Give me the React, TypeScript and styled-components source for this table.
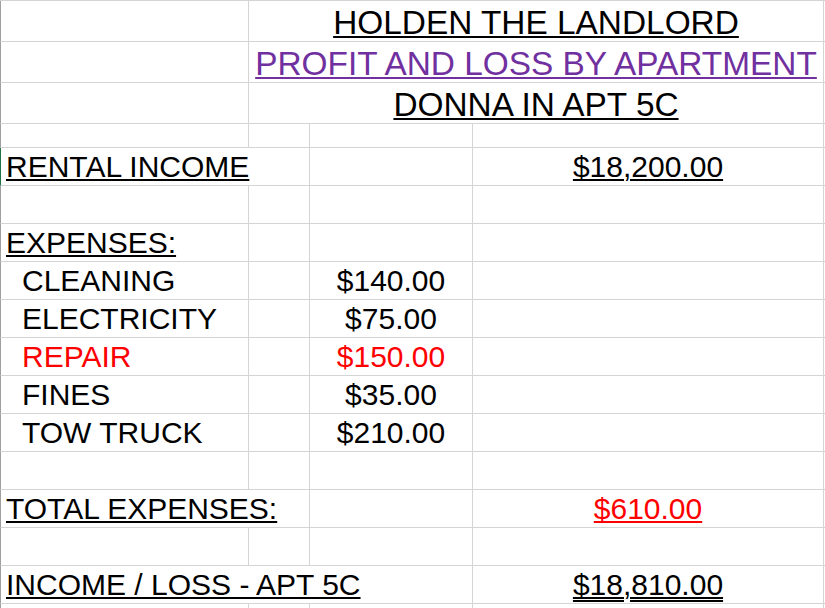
import React from "react";
import styled, { createGlobalStyle } from "styled-components";

const GlobalStyle = createGlobalStyle`
  html, body {
    margin: 0;
    padding: 0;
    background: #ffffff;
    overflow: hidden;
  }
  body {
    font-family: "Liberation Sans", Arial, sans-serif;
  }
`;

const GRID = "#d4d4d4";

const Sheet = styled.div`
  display: grid;
  grid-template-columns: 249px 61px 163px 351px 1fr;
  grid-template-rows: 41px 41px 41px 24px repeat(13, 38px);
  border-top: 1px solid ${GRID};
  width: 100vw;
  height: 608px;
  overflow: hidden;
`;

type Tone = "black" | "red" | "purple";

const toneColor: Record<Tone, string> = {
  black: "#000000",
  red: "#ff0000",
  purple: "#7030a0",
};

const Cell = styled.div<{
  $span?: number;
  $align?: "left" | "center";
  $indent?: boolean;
  $tone?: Tone;
  $first?: boolean;
  $selected?: boolean;
  $title?: boolean;
}>`
  box-sizing: border-box;
  grid-column: span ${(p) => p.$span ?? 1};
  border-right: 1px solid ${GRID};
  border-bottom: 1px solid ${GRID};
  border-left: ${(p) =>
    p.$first ? `1px solid ${p.$selected ? "#217346" : "#9f9f9f"}` : "none"};
  display: flex;
  align-items: flex-end;
  justify-content: ${(p) => (p.$align === "center" ? "center" : "flex-start")};
  padding: 0 0 ${(p) => (p.$title ? "2px" : "3px")}
    ${(p) => (p.$align === "center" ? "0" : p.$indent ? "21px" : "5px")};
  font-size: ${(p) => (p.$title ? "33.4px" : "30px")};
  line-height: 1;
  color: ${(p) => toneColor[p.$tone ?? "black"]};
  white-space: nowrap;
  overflow: visible;
`;

const Text = styled.span<{ $line?: "single" | "double" }>`
  text-decoration-line: ${(p) => (p.$line ? "underline" : "none")};
  text-decoration-style: ${(p) => (p.$line === "double" ? "double" : "solid")};
  text-decoration-thickness: ${(p) => (p.$line === "double" ? "1.5px" : "2px")};
  text-underline-offset: 2px;
`;

type CellSpec = {
  text?: string;
  span?: number;
  align?: "left" | "center";
  indent?: boolean;
  tone?: Tone;
  line?: "single" | "double";
  title?: boolean;
};

type Row = {
  cells: CellSpec[];
  selected?: boolean;
};

const empty = (n: number): CellSpec[] => Array.from({ length: n }, () => ({}));

const rows: Row[] = [
  {
    cells: [
      {},
      { text: "HOLDEN THE LANDLORD", span: 3, align: "center", line: "single", title: true },
      {},
    ],
  },
  {
    cells: [
      {},
      {
        text: "PROFIT AND LOSS BY APARTMENT",
        span: 3,
        align: "center",
        line: "single",
        tone: "purple",
        title: true,
      },
      {},
    ],
  },
  {
    cells: [
      {},
      { text: "DONNA IN APT 5C", span: 3, align: "center", line: "single", title: true },
      {},
    ],
  },
  { cells: empty(5) },
  {
    selected: true,
    cells: [
      { text: "RENTAL INCOME", span: 2, line: "single" },
      {},
      { text: "$18,200.00", align: "center", line: "single" },
      {},
    ],
  },
  { cells: empty(5) },
  { cells: [{ text: "EXPENSES:", line: "single" }, {}, {}, {}, {}] },
  { cells: [{ text: "CLEANING", indent: true }, {}, { text: "$140.00", align: "center" }, {}, {}] },
  { cells: [{ text: "ELECTRICITY", indent: true }, {}, { text: "$75.00", align: "center" }, {}, {}] },
  {
    cells: [
      { text: "REPAIR", indent: true, tone: "red" },
      {},
      { text: "$150.00", align: "center", tone: "red" },
      {},
      {},
    ],
  },
  { cells: [{ text: "FINES", indent: true }, {}, { text: "$35.00", align: "center" }, {}, {}] },
  { cells: [{ text: "TOW TRUCK", indent: true }, {}, { text: "$210.00", align: "center" }, {}, {}] },
  { cells: empty(5) },
  {
    cells: [
      { text: "TOTAL EXPENSES:", span: 2, line: "single" },
      {},
      { text: "$610.00", align: "center", line: "single", tone: "red" },
      {},
    ],
  },
  { cells: empty(5) },
  {
    cells: [
      { text: "INCOME / LOSS - APT 5C", span: 3, line: "single" },
      { text: "$18,810.00", align: "center", line: "double" },
      {},
    ],
  },
  { cells: empty(5) },
];

export default function App() {
  return (
    <>
      <GlobalStyle />
      <Sheet>
        {rows.map((row, r) =>
          row.cells.map((c, i) => (
            <Cell
              key={`${r}-${i}`}
              $span={c.span}
              $align={c.align}
              $indent={c.indent}
              $tone={c.tone}
              $title={c.title}
              $first={i === 0}
              $selected={i === 0 && row.selected}
            >
              {c.text ? <Text $line={c.line}>{c.text}</Text> : null}
            </Cell>
          ))
        )}
      </Sheet>
    </>
  );
}
